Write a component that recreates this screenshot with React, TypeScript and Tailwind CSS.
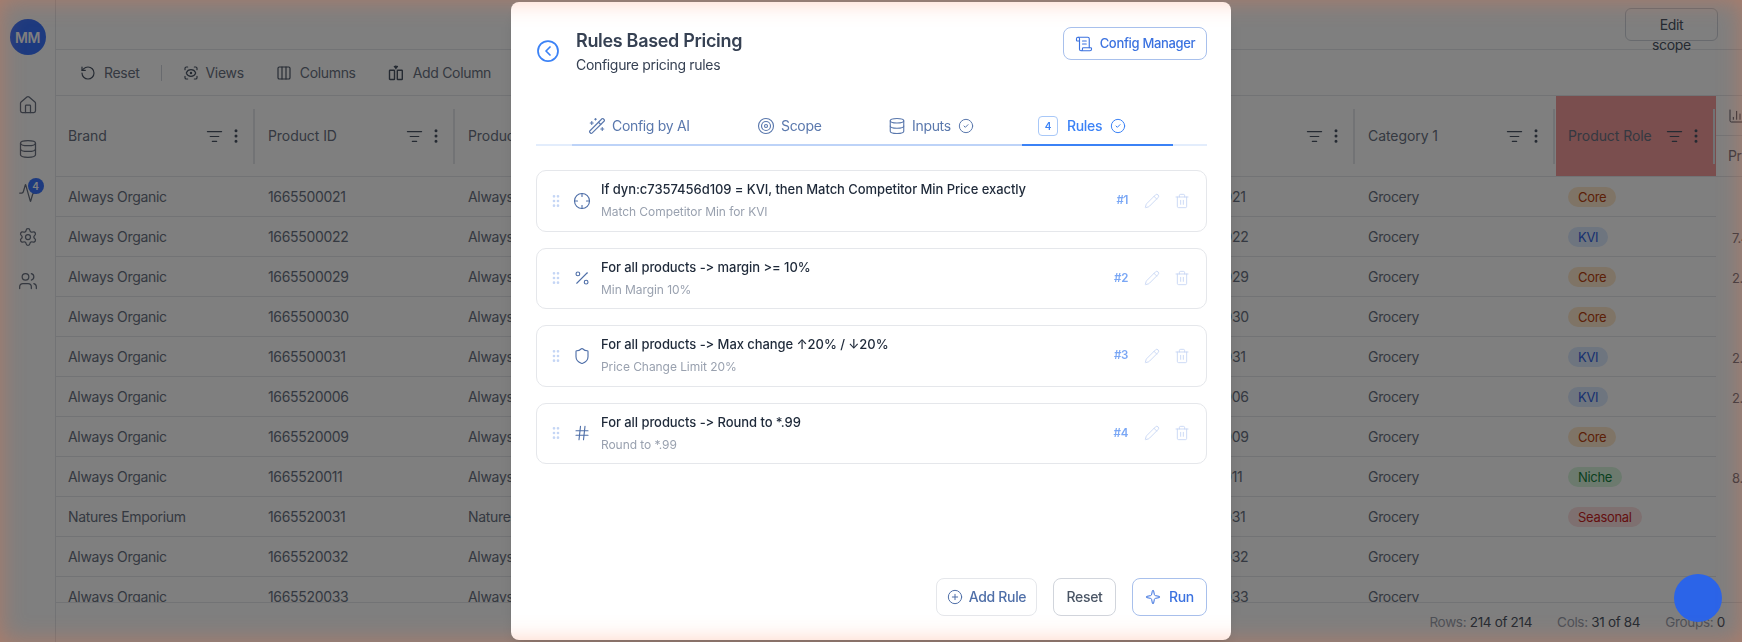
import React from "react";
import {
  Activity, ChartColumn, CircleCheck, CircleChevronLeft, CirclePlus, Columns3, Crosshair, Database,
  EllipsisVertical, GripVertical, Hash, House, ListFilter, Pencil, Percent, RotateCcw, ScanEye,
  ScrollText, Settings, Shield, Sparkle, Target, Trash2, Users, WandSparkles,
} from "lucide-react";

type Role = "Core" | "KVI" | "Niche" | "Seasonal" | "";

const rows: { brand: string; id: string; tail: string; role: Role; side: string }[] = [
  { brand: "Always Organic", id: "1665500021", tail: "Always Organic", role: "Core", side: "" },
  { brand: "Always Organic", id: "1665500022", tail: "Always Organic", role: "KVI", side: "7.49" },
  { brand: "Always Organic", id: "1665500029", tail: "Always Organic", role: "Core", side: "2.99" },
  { brand: "Always Organic", id: "1665500030", tail: "Always Organic", role: "Core", side: "" },
  { brand: "Always Organic", id: "1665500031", tail: "Always Organic", role: "KVI", side: "2.49" },
  { brand: "Always Organic", id: "1665520006", tail: "Always Organic", role: "KVI", side: "2.99" },
  { brand: "Always Organic", id: "1665520009", tail: "Always Organic", role: "Core", side: "" },
  { brand: "Always Organic", id: "1665520011", tail: "Always Organic", role: "Niche", side: "8.99" },
  { brand: "Natures Emporium", id: "1665520031", tail: "Natures Emporium", role: "Seasonal", side: "" },
  { brand: "Always Organic", id: "1665520032", tail: "Always Organic", role: "", side: "" },
  { brand: "Always Organic", id: "1665520033", tail: "Always Organic", role: "", side: "" },
];

const roleClass: Record<string, string> = {
  Core: "bg-[#ffe9cc] text-[#b8400f]",
  KVI: "bg-[#dceaff] text-[#2f5fe0]",
  Niche: "bg-[#d8f5dc] text-[#15803d]",
  Seasonal: "bg-[#fde0e0] text-[#c81e1e]",
};

const rules = [
  { icon: Crosshair, title: "If dyn:c7357456d109 = KVI, then Match Competitor Min Price exactly", sub: "Match Competitor Min for KVI", n: "#1" },
  { icon: Percent, title: "For all products -> margin >= 10%", sub: "Min Margin 10%", n: "#2" },
  { icon: Shield, title: "For all products -> Max change ↑20% / ↓20%", sub: "Price Change Limit 20%", n: "#3" },
  { icon: Hash, title: "For all products -> Round to *.99", sub: "Round to *.99", n: "#4" },
];

function AddColumnIcon() {
  return (
    <svg width="16" height="16" viewBox="0 0 16 16" fill="none" stroke="currentColor" strokeWidth="1.4" strokeLinecap="round" strokeLinejoin="round">
      <rect x="1.5" y="5.2" width="5" height="9.3" rx="0.6" />
      <rect x="9.3" y="5.2" width="5" height="9.3" rx="0.6" />
      <path d="M7.9 1v2.8M6.4 1.4l1.5 1.6 1.5-1.6" />
    </svg>
  );
}

function HeadCell({ label, w, red }: { label: string; w: string; red?: boolean }) {
  return (
    <div className={`flex h-full shrink-0 items-center pl-3 pr-px ${w} ${red ? "bg-[#f59c9c]" : ""}`}>
      <span className="min-w-0 flex-1 truncate text-sm tracking-[-0.005em] text-gray-500">{label}</span>
      <ListFilter size={17} strokeWidth={1.75} className="shrink-0 text-gray-600" />
      <EllipsisVertical size={18} strokeWidth={2} className="ml-[4px] shrink-0 text-gray-600" />
      <div className="ml-2 h-[55px] w-[2px] shrink-0 bg-gray-200" />
    </div>
  );
}

function Cell({ w, children }: { w: string; children?: React.ReactNode }) {
  return <div className={`flex h-full shrink-0 items-center overflow-hidden whitespace-nowrap pl-3 text-sm text-gray-500 ${w}`}>{children}</div>;
}

function Background() {
  return (
    <div className="flex h-[642px] w-[1742px]">
      <aside className="flex w-[56px] shrink-0 flex-col items-center border-r border-gray-200 pt-[19px]">
        <div className="flex size-9 items-center justify-center rounded-full bg-[#3a75ff] text-[14px] font-semibold text-white">MM</div>
        <div className="mt-[40px] flex flex-col items-center gap-[24px] text-gray-500">
          <House size={20} strokeWidth={1.5} />
          <Database size={20} strokeWidth={1.5} />
          <div className="relative">
            <Activity size={20} strokeWidth={1.5} />
            <span className="absolute -right-[6px] -top-[5px] flex size-4 items-center justify-center rounded-full bg-[#3a75ff] text-[10px] font-semibold text-white">4</span>
          </div>
          <Settings size={20} strokeWidth={1.5} />
          <Users size={20} strokeWidth={1.5} />
        </div>
      </aside>
      <main className="flex w-[1686px] flex-col">
        <header className="flex h-[50px] shrink-0 items-start justify-end border-b border-gray-200 pr-6 pt-2">
          <div className="h-[33px] w-[93px] rounded-md border border-gray-300 px-6 pt-[6px] text-center text-sm leading-5 text-gray-600">Edit scope</div>
        </header>
        <div className="flex h-[46px] shrink-0 items-center border-b border-gray-200 pl-[24px] text-sm text-gray-500">
          <RotateCcw size={16} strokeWidth={1.75} className="text-gray-600" />
          <span className="ml-[8px]">Reset</span>
          <div className="ml-[21px] h-4 w-px bg-gray-300" />
          <ScanEye size={16} strokeWidth={1.75} className="ml-[21px] text-gray-600" />
          <span className="ml-[7px]">Views</span>
          <Columns3 size={16} strokeWidth={1.75} className="ml-[32px] text-gray-600" />
          <span className="ml-[8px]">Columns</span>
          <div className="ml-[32px] text-gray-600"><AddColumnIcon /></div>
          <span className="ml-[9px]">Add Column</span>
        </div>
        <div className="flex min-h-0 flex-1 overflow-hidden">
          <div className="w-[1660px] shrink-0">
            <div className="flex h-[81px] border-b border-gray-200">
              <HeadCell label="Brand" w="w-[200px]" />
              <HeadCell label="Product ID" w="w-[200px]" />
              <HeadCell label="Product Name" w="w-[200px]" />
              <div className="w-[500px] shrink-0" />
              <HeadCell label="UPC" w="w-[200px]" />
              <HeadCell label="Category 1" w="w-[200px]" />
              <HeadCell label="Product Role" w="w-[160px]" red />
            </div>
            {rows.map((r) => (
              <div key={r.id} className="flex h-10 border-b border-gray-200">
                <Cell w="w-[200px]">{r.brand}</Cell>
                <Cell w="w-[200px]">{r.id}</Cell>
                <Cell w="w-[200px]">{r.tail}</Cell>
                <div className="w-[500px] shrink-0" />
                <Cell w="w-[200px]">{r.id}</Cell>
                <Cell w="w-[200px]">Grocery</Cell>
                <Cell w="w-[160px]">
                  {r.role && <span className={`mt-[1px] flex h-5 items-center rounded-full px-[10px] text-[13px] ${roleClass[r.role]}`}>{r.role}</span>}
                </Cell>
              </div>
            ))}
          </div>
          <div className="w-[26px] shrink-0 overflow-hidden">
            <div className="flex h-10 items-center border-b border-gray-200 pl-[12px] text-gray-600">
              <ChartColumn size={16} strokeWidth={1.5} className="shrink-0" />
            </div>
            <div className="flex h-[41px] items-center border-b border-gray-200 pl-[12px] text-sm text-gray-500">Price</div>
            {rows.map((r) => (
              <div key={r.id} className="flex h-10 items-center whitespace-nowrap pl-[16px] pt-[3px] text-[13px] text-gray-500">{r.side}</div>
            ))}
          </div>
        </div>
        <footer className="flex h-[40px] shrink-0 items-center justify-end gap-[25px] border-t border-gray-200 pr-[17px] text-[13.5px] text-gray-400">
          <span>Rows: <span className="text-gray-600">214 of 214</span></span>
          <span>Cols: <span className="text-gray-600">31 of 84</span></span>
          <span>Groups: <span className="text-gray-600">0</span></span>
        </footer>
      </main>
    </div>
  );
}

function Modal() {
  return (
    <div className="flex h-[638px] w-[720px] flex-col rounded-lg bg-white pb-6 pl-[25px] pr-[24px] pt-[25px] shadow-lg">
      <div className="flex items-start">
        <CircleChevronLeft size={24} strokeWidth={1.75} className="mt-[12px] shrink-0 text-[#3b82f6]" />
        <div className="ml-[16px] flex-1">
          <div className="text-[18px] font-semibold leading-7 text-gray-700">Rules Based Pricing</div>
          <div className="text-sm leading-5 text-gray-700">Configure pricing rules</div>
        </div>
        <button className="flex h-[33px] w-[144px] items-center justify-center gap-[7px] rounded-lg border border-[#a8c0ec] text-[13px] font-medium text-[#3b72e0]">
          <ScrollText size={18} strokeWidth={1.5} />
          Config Manager
        </button>
      </div>
      <div className="mt-[37px] flex border-b-2 border-[#e3edfc] pl-[36px]">
        <div className="-mb-[2px] flex h-[34px] text-sm text-[#5a78ad]">
          <div className="flex w-[150px] items-center gap-[6px] border-b-2 border-[#bdd3f8] pb-1 pl-[16px]">
            <WandSparkles size={18} strokeWidth={1.5} />Config by AI
          </div>
          <div className="flex w-[150px] items-center gap-[6px] border-b-2 border-[#bdd3f8] pb-1 pl-[35px]">
            <Target size={18} strokeWidth={1.5} />Scope
          </div>
          <div className="flex w-[150px] items-center border-b-2 border-[#bdd3f8] pb-1 pl-[16px]">
            <Database size={18} strokeWidth={1.5} /><span className="ml-[6px]">Inputs</span>
            <CircleCheck size={16} strokeWidth={1.5} className="ml-[7px]" />
          </div>
          <div className="flex w-[151px] items-center border-b-2 border-[#3b82f6] pb-1 pl-[16px] font-medium text-[#3b82f6]">
            <span className="flex size-5 items-center justify-center rounded-[4px] border border-[#a8c8f8] text-[10px] font-semibold">4</span>
            <span className="ml-[9px]">Rules</span>
            <CircleCheck size={16} strokeWidth={1.5} className="ml-[8px]" />
          </div>
        </div>
      </div>
      <div className="mt-6 flex flex-col gap-4">
        {rules.map((r) => (
          <div key={r.n} className="flex h-[61.5px] items-center rounded-[10px] border border-gray-200 pl-[11px] pr-[16px]">
            <GripVertical size={16} strokeWidth={2} className="shrink-0 text-[#c5d6f5]" />
            <r.icon size={18} strokeWidth={1.5} className="ml-[9px] shrink-0 text-[#4f6fa8]" />
            <div className="ml-[10px] min-w-0 flex-1 self-start pt-[9px]">
              <div className="text-[13px] font-medium leading-[19px] tracking-[-0.005em] text-gray-800">{r.title}</div>
              <div className="mt-[5px] text-xs leading-4 tracking-[-0.005em] text-gray-400">{r.sub}</div>
            </div>
            <span className="text-[11.5px] font-semibold text-[#7aa7f5]">{r.n}</span>
            <Pencil size={16} strokeWidth={1.25} className="ml-[16px] shrink-0 text-[#c3d3f3]" />
            <Trash2 size={16} strokeWidth={1.25} className="ml-[14px] shrink-0 text-[#c3d3f3]" />
          </div>
        ))}
      </div>
      <div className="mt-auto flex justify-end gap-4 text-sm font-medium">
        <button className="flex h-[38px] w-[101px] items-center justify-center gap-[6px] rounded-lg border border-gray-200 text-[#4f6fa8]">
          <CirclePlus size={16} strokeWidth={1.5} />Add Rule
        </button>
        <button className="flex h-[38px] w-[63px] items-center justify-center rounded-lg border border-gray-300 text-gray-600">Reset</button>
        <button className="flex h-[38px] w-[75px] items-center justify-center gap-[8px] rounded-lg border border-[#a8c0ec] text-[#3b72e0]">
          <Sparkle size={16} strokeWidth={1.5} />Run
        </button>
      </div>
    </div>
  );
}

export default function App() {
  return (
    <div className="relative h-[642px] w-[1742px] overflow-hidden bg-white font-['Inter',sans-serif] tracking-[-0.02em] [font-feature-settings:'calt'_0]">
      <Background />
      <div className="absolute inset-0 bg-black/50 backdrop-blur-[0.5px]" />
      <div className="absolute inset-0 flex items-center justify-center">
        <Modal />
      </div>
      <div className="absolute bottom-5 right-5 size-12 rounded-full bg-[#2b64e8]" />
      <div className="pointer-events-none absolute inset-0 shadow-[inset_0_0_24px_rgba(255,120,70,0.38)]" />
    </div>
  );
}
